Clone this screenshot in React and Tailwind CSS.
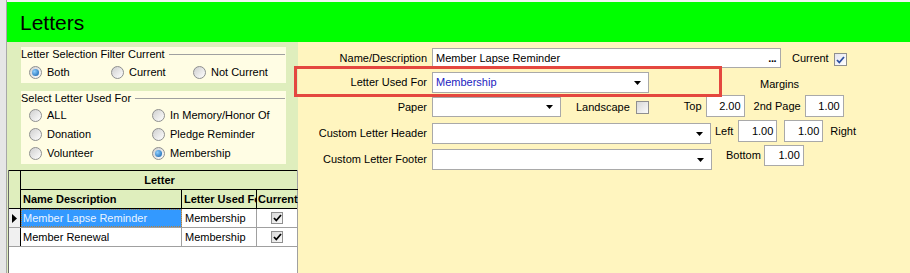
import React from "react";

const font = { fontFamily: '"Liberation Sans", Arial, sans-serif' };

function Radio({ checked }) {
  return (
    <span className="inline-flex w-[13px] h-[13px] shrink-0 rounded-full border border-[#8e8f8f] bg-linear-to-br from-[#cfcfcf] to-[#ffffff] items-center justify-center">
      {checked && (
        <span className="w-[7px] h-[7px] rounded-full bg-[radial-gradient(circle_at_35%_35%,#8fd0ff,#0b5aa8)]" />
      )}
    </span>
  );
}

function RadioItem({ checked, label, w }) {
  return (
    <div className={`flex items-center ${w}`}>
      <Radio checked={checked} />
      <span className="ml-[5px] whitespace-nowrap">{label}</span>
    </div>
  );
}

function Check({ checked, blue, size = "w-[13px] h-[13px]", className = "" }) {
  return (
    <span
      className={`flex ${size} shrink-0 items-center justify-center border border-[#8f8f8f] ${
        blue ? "bg-linear-to-br from-[#e4e4ee] to-[#ffffff]" : "bg-linear-to-br from-[#d8d8d8] to-[#fbfbfb]"
      } ${className}`}
    >
      {checked && (
        <svg width="9" height="8" viewBox="0 0 9 8">
          <path
            d="M1 4 L3.3 6.5 L8 1"
            fill="none"
            stroke={blue ? "#2c4f9e" : "#000"}
            strokeWidth="1.8"
          />
        </svg>
      )}
    </span>
  );
}

function Legend({ text }) {
  return (
    <div className="flex items-center h-[14px] leading-[14px]">
      <span className="whitespace-nowrap">{text}</span>
      <span className="flex-1 h-px bg-[#a0a0a0] ml-[4px] mr-[1px]" />
    </div>
  );
}

function Arrow() {
  return (
    <svg width="7" height="4" viewBox="0 0 7 4" className="absolute right-[7px] top-1/2 -translate-y-1/2">
      <path d="M0 0 H7 L3.5 4 Z" fill="#000" />
    </svg>
  );
}

function Select({ w, h = "h-[21px]", value, blue, className = "" }) {
  return (
    <div
      className={`relative ${w} ${h} bg-white border border-[#a9a9a9] flex items-center pl-[3px] ${className}`}
    >
      {value && <span className={blue ? "text-[#1c1cbf]" : "text-black"}>{value}</span>}
      <Arrow />
    </div>
  );
}

function NumBox({ value, w = "w-[39px]", h = "h-[22px]", className = "" }) {
  return (
    <div
      className={`${w} ${h} bg-white border border-[#a9a9a9] flex items-center justify-end pr-[3px] ${className}`}
    >
      {value}
    </div>
  );
}

function Label({ text, h = "h-[21px]", className = "" }) {
  return (
    <div className={`w-[129px] shrink-0 text-right ${h} flex items-center justify-end ${className}`}>
      {text}
    </div>
  );
}

export default function App() {
  return (
    <div
      className="w-[910px] h-[273px] overflow-hidden flex bg-[#ececec] text-[11px] text-black"
      style={font}
    >
      <div className="w-[7px] shrink-0 bg-[#e6e6e6] border-r border-[#a8a8a8]" />
      <div className="flex-1 flex flex-col pt-[2px] bg-[#f4f4f4]">
        {/* Header */}
        <div className="h-[40px] shrink-0 bg-[#00ff00] flex items-center pl-[13px]">
          <span className="text-[21px] leading-none">Letters</span>
        </div>

        <div className="flex-1 flex min-h-0">
          {/* Left panel */}
          <div className="w-[291px] shrink-0 bg-[#dfeebd] flex flex-col">
            <div className="ml-[14px] mt-[5px] w-[265px] h-[36px] bg-[#fffde4]">
              <Legend text="Letter Selection Filter Current" />
              <div className="flex items-center h-[19px] mt-[2px] pl-[8px]">
                <RadioItem checked label="Both" w="w-[82px]" />
                <RadioItem label="Current" w="w-[82px]" />
                <RadioItem label="Not Current" w="w-[90px]" />
              </div>
            </div>

            <div className="ml-[14px] mt-[8px] w-[265px] h-[73px] bg-[#fffde4]">
              <Legend text="Select Letter Used For" />
              <div className="grid grid-cols-[123px_1fr] auto-rows-[19px] items-center pl-[8px] mt-[1px]">
                <RadioItem label="ALL" />
                <RadioItem label="In Memory/Honor Of" />
                <RadioItem label="Donation" />
                <RadioItem label="Pledge Reminder" />
                <RadioItem label="Volunteer" />
                <RadioItem checked label="Membership" />
              </div>
            </div>

            {/* Grid */}
            <div className="ml-[1px] mt-[6px] w-[290px] flex-1 bg-white border-r border-[#a0a0a0] border-l border-l-[#696969] flex flex-col">
              <div className="flex border-t border-black border-b border-b-black bg-[#dfeebd]">
                <div className="w-[12px] shrink-0 border-r border-black" />
                <div className="flex-1 flex flex-col font-bold">
                  <div className="h-[19px] border-b border-black flex items-center justify-center">
                    Letter
                  </div>
                  <div className="h-[18px] flex">
                    <div className="w-[161px] shrink-0 border-r border-black flex items-center pl-[2px] whitespace-nowrap overflow-hidden">
                      Name Description
                    </div>
                    <div className="w-[75px] shrink-0 border-r border-black flex items-center pl-[2px] whitespace-nowrap overflow-hidden">
                      <span className="block w-[72px] overflow-hidden">Letter Used For</span>
                    </div>
                    <div className="flex-1 min-w-0 flex items-center pl-[1px] whitespace-nowrap overflow-hidden">
                      <span className="block w-[40px] overflow-hidden">Current</span>
                    </div>
                  </div>
                </div>
              </div>

              {[
                { name: "Member Lapse Reminder", sel: true },
                { name: "Member Renewal", sel: false },
              ].map((r) => (
                <div key={r.name} className="flex h-[19px] border-b border-[#a0a0a0]">
                  <div className="w-[12px] shrink-0 bg-[#f0f0f0] border-r border-black flex items-center justify-center">
                    {r.sel && (
                      <svg width="5" height="9" viewBox="0 0 5 9">
                        <path d="M0 0 L5 4.5 L0 9 Z" fill="#000" />
                      </svg>
                    )}
                  </div>
                  <div
                    className={`w-[161px] shrink-0 border-r border-[#a0a0a0] flex items-center pl-[2px] whitespace-nowrap overflow-hidden ${
                      r.sel ? "bg-[#3399ff] text-[#eaf4ff] outline-1 outline-dotted outline-[#b08040] -outline-offset-1" : ""
                    }`}
                  >
                    {r.name}
                  </div>
                  <div className="w-[75px] shrink-0 border-r border-[#a0a0a0] flex items-center pl-[3px]">
                    Membership
                  </div>
                  <div className="flex-1 flex items-center justify-center">
                    <Check checked size="w-[12px] h-[12px]" />
                  </div>
                </div>
              ))}
            </div>
          </div>

          {/* Right panel */}
          <div className="relative flex-1 bg-[#fff5bf] pt-[6px] flex flex-col">
            <div className="absolute left-[-4px] top-[24px] w-[428px] h-[31px] border-[3px] border-[#e4473f] z-10 pointer-events-none" />

            {/* Row 1 */}
            <div className="flex items-center h-[20px]">
              <Label text="Name/Description" h="h-[20px]" />
              <div className="ml-[5px] w-[349px] h-[20px] bg-white border border-[#a9a9a9] flex items-center justify-between pl-[3px] pr-[4px]">
                <span>Member Lapse Reminder</span>
                <span className="font-bold tracking-[-0.5px] leading-none">...</span>
              </div>
              <span className="ml-[11px]">Current</span>
              <Check checked blue className="ml-[5px] mt-[3px]" />
            </div>

            {/* Row 2 */}
            <div className="flex items-end h-[21px] mt-[4px]">
              <Label text="Letter Used For" />
              <Select w="w-[217px] ml-[5px]" value="Membership" blue />
              <span className="ml-[111px] mb-[1px]">Margins</span>
            </div>

            {/* Row 3 */}
            <div className="flex items-end h-[22px] mt-[2px]">
              <Label text="Paper" h="h-[20px]" />
              <Select w="w-[129px] ml-[5px]" h="h-[20px]" />
              <span className="ml-[15px] h-[20px] flex items-center">Landscape</span>
              <Check className="ml-[6px] mb-[3px]" />
              <span className="ml-[35px] h-[22px] flex items-center">Top</span>
              <NumBox value="2.00" className="ml-[4px]" />
              <span className="ml-[9px] h-[22px] flex items-center">2nd Page</span>
              <NumBox value="1.00" className="ml-[4px]" />
            </div>

            {/* Row 4 */}
            <div className="flex items-end h-[24px] mt-[3px]">
              <Label text="Custom Letter Header" />
              <Select w="w-[279px] ml-[5px]" />
              <span className="ml-[4px] h-[22px] self-start flex items-center">Left</span>
              <NumBox value="1.00" className="ml-[5px] self-start" />
              <NumBox value="1.00" className="ml-[7px] self-start" />
              <span className="ml-[7px] h-[22px] self-start flex items-center">Right</span>
            </div>

            {/* Row 5 */}
            <div className="flex items-end h-[25px] mt-[1px]">
              <Label text="Custom Letter Footer" />
              <Select w="w-[280px] ml-[5px]" />
              <span className="ml-[14px] h-[21px] self-start flex items-center">Bottom</span>
              <NumBox value="1.00" w="w-[40px]" h="h-[21px]" className="ml-[3px] self-start" />
            </div>
          </div>
        </div>
      </div>
    </div>
  );
}
